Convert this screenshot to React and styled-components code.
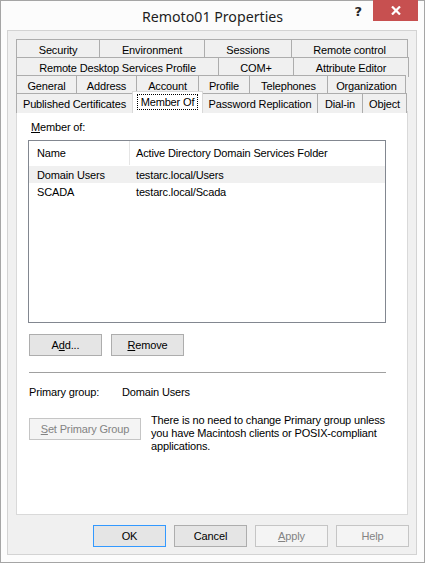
import React from "react";
import styled, { createGlobalStyle } from "styled-components";

const GlobalStyle = createGlobalStyle`
  html, body {
    margin: 0;
    padding: 0;
    background: #ffffff;
  }
  * {
    box-sizing: border-box;
  }
`;

const tabRows = [
  [
    { label: "Security", width: 84 },
    { label: "Environment", width: 106 },
    { label: "Sessions", width: 88 },
    { label: "Remote control", width: 117 },
  ],
  [
    { label: "Remote Desktop Services Profile", width: 203 },
    { label: "COM+", width: 76 },
    { label: "Attribute Editor", width: 116 },
  ],
  [
    { label: "General", width: 61 },
    { label: "Address", width: 61 },
    { label: "Account", width: 63 },
    { label: "Profile", width: 52 },
    { label: "Telephones", width: 79 },
    { label: "Organization", width: 79 },
  ],
  [
    { label: "Published Certificates", width: 117 },
    { label: "Member Of", width: 71, selected: true },
    { label: "Password Replication", width: 116 },
    { label: "Dial-in", width: 46 },
    { label: "Object", width: 45 },
  ],
];

const groups = [
  { name: "Domain Users", folder: "testarc.local/Users", selected: true },
  { name: "SCADA", folder: "testarc.local/Scada" },
];

export default function App() {
  return (
    <>
      <GlobalStyle />
      <Window>
        <TitleBar>
          <Title>Remoto01 Properties</Title>
          <HelpButton>?</HelpButton>
          <CloseButton>
            <svg width="10" height="9" viewBox="0 0 10 9">
              <path d="M1 0.5 L9 8.5 M9 0.5 L1 8.5" stroke="#ffffff" strokeWidth="2.2" />
            </svg>
          </CloseButton>
        </TitleBar>
        <Client>
          <Tabs>
            {tabRows.map((row, i) => (
              <TabRow key={i}>
                {row.map((tab) => (
                  <Tab key={tab.label} $width={tab.width} $selected={tab.selected}>
                    {tab.selected ? <Focus>{tab.label}</Focus> : tab.label}
                  </Tab>
                ))}
              </TabRow>
            ))}
          </Tabs>
          <Panel>
            <Label>
              <u>M</u>ember of:
            </Label>
            <ListBox>
              <ListHeader>
                <NameCol>Name</NameCol>
                <HeaderFolder>Active Directory Domain Services Folder</HeaderFolder>
              </ListHeader>
              {groups.map((g) => (
                <ListRow key={g.name} $selected={g.selected}>
                  <NameCell>{g.name}</NameCell>
                  <FolderCell>{g.folder}</FolderCell>
                </ListRow>
              ))}
            </ListBox>
            <ButtonRow>
              <Button>
                A<u>d</u>d...
              </Button>
              <Button>
                <u>R</u>emove
              </Button>
            </ButtonRow>
            <Separator />
            <PrimaryRow>
              <PrimaryLabel>Primary group:</PrimaryLabel>
              <span>Domain Users</span>
            </PrimaryRow>
            <PrimarySection>
              <Button $disabled $width={112}>
                <u>S</u>et Primary Group
              </Button>
              <Note>
                There is no need to change Primary group unless you have Macintosh
                clients or POSIX-compliant applications.
              </Note>
            </PrimarySection>
          </Panel>
          <Footer>
            <Button $default>OK</Button>
            <Button>Cancel</Button>
            <Button $disabled>
              <u>A</u>pply
            </Button>
            <Button $disabled>Help</Button>
          </Footer>
        </Client>
      </Window>
    </>
  );
}

const Window = styled.div`
  width: 425px;
  height: 563px;
  display: flex;
  flex-direction: column;
  background: #fcfcfc;
  border: 1px solid #a5a5a5;
  font-family: "Liberation Sans", Arial, sans-serif;
  font-size: 11px;
  letter-spacing: -0.15px;
  color: #000000;
`;

const TitleBar = styled.div`
  position: relative;
  height: 29px;
  display: flex;
  align-items: center;
  justify-content: center;
`;

const Title = styled.div`
  font-family: "Noto Sans", "Open Sans", sans-serif;
  font-size: 14.2px;
  letter-spacing: 0;
  color: #1e1e1e;
  padding-top: 2px;
`;

const HelpButton = styled.div`
  position: absolute;
  right: 62px;
  top: 3px;
  font-family: "DejaVu Sans", sans-serif;
  font-weight: bold;
  font-size: 13px;
  color: #262626;
`;

const CloseButton = styled.div`
  position: absolute;
  right: 6px;
  top: -1px;
  width: 45px;
  height: 21px;
  background: #c75050;
  display: flex;
  align-items: center;
  justify-content: center;
`;

const Client = styled.div`
  flex: 1;
  margin: 0 7px 7px 6px;
  background: #f0f0f0;
  border: 1px solid #d3d3d3;
  padding: 8px 7px 0 8px;
  display: flex;
  flex-direction: column;
`;

const Tabs = styled.div`
  display: flex;
  flex-direction: column;
`;

const TabRow = styled.div`
  display: flex;
  height: 19px;
  margin-bottom: -1px;
`;

const Tab = styled.div`
  width: ${(p) => p.$width}px;
  flex: none;
  margin-right: -1px;
  border: 1px solid #adadad;
  border-bottom: none;
  background: ${(p) => (p.$selected ? "#ffffff" : "#f0f0f0")};
  display: flex;
  align-items: center;
  justify-content: center;
  white-space: nowrap;
  position: relative;
  z-index: ${(p) => (p.$selected ? 2 : 1)};
  margin-top: ${(p) => (p.$selected ? "-2px" : "0")};
  height: ${(p) => (p.$selected ? "22px" : "20px")};
  border-color: ${(p) => (p.$selected ? "#d9d9d9" : "#adadad")};
  &:last-child {
    margin-right: 0;
  }
`;

const Focus = styled.span`
  outline: 1px dotted #000000;
  outline-offset: 1px;
  padding: 0 2px;
  margin-top: -1px;
`;

const Panel = styled.div`
  width: 392px;
  height: 404px;
  background: #ffffff;
  border: 1px solid #d9d9d9;
  padding: 8px 21px 0 11px;
  display: flex;
  flex-direction: column;
`;

const Label = styled.div`
  margin-left: 3px;
  height: 14px;
  line-height: 14px;
`;

const ListBox = styled.div`
  margin-top: 6px;
  height: 183px;
  border: 1px solid #828790;
  background: #ffffff;
  display: flex;
  flex-direction: column;
`;

const ListHeader = styled.div`
  height: 24px;
  display: flex;
  align-items: center;
  margin-bottom: 1px;
`;

const NameCol = styled.div`
  width: 101px;
  padding-left: 8px;
  height: 100%;
  display: flex;
  align-items: center;
  border-right: 1px solid #e5e5e5;
`;

const HeaderFolder = styled.div`
  padding-left: 6px;
  flex: 1;
  height: 100%;
  display: flex;
  align-items: center;
`;

const ListRow = styled.div`
  height: 17px;
  display: flex;
  align-items: center;
  background: ${(p) => (p.$selected ? "#f0f0f0" : "transparent")};
`;

const NameCell = styled.div`
  width: 101px;
  padding-left: 8px;
`;

const FolderCell = styled.div`
  padding-left: 6px;
`;

const ButtonRow = styled.div`
  display: flex;
  gap: 9px;
  margin-top: 11px;
  margin-left: 1px;
`;

const Button = styled.div`
  width: ${(p) => p.$width || 73}px;
  height: 22px;
  flex: none;
  border: 1px solid
    ${(p) => (p.$default ? "#3399ff" : p.$disabled ? "#c5c5c5" : "#adadad")};
  background: ${(p) => (p.$disabled ? "#f4f4f4" : "#e5e5e5")};
  color: ${(p) => (p.$disabled ? "#838383" : "#000000")};
  display: flex;
  align-items: center;
  justify-content: center;
  white-space: nowrap;
`;

const Separator = styled.div`
  height: 1px;
  background: #a0a0a0;
  margin: 16px 0 0 1px;
`;

const PrimaryRow = styled.div`
  display: flex;
  margin-top: 12px;
  margin-left: 1px;
  height: 14px;
  line-height: 14px;
`;

const PrimaryLabel = styled.span`
  width: 93px;
`;

const PrimarySection = styled.div`
  display: flex;
  gap: 10px;
  margin-top: 19px;
  margin-left: 1px;
  align-items: flex-start;
`;

const Note = styled.div`
  width: 245px;
  line-height: 13px;
  margin-top: -4px;
`;

const Footer = styled.div`
  display: flex;
  justify-content: flex-end;
  gap: 8px;
  margin-top: 10px;
`;
